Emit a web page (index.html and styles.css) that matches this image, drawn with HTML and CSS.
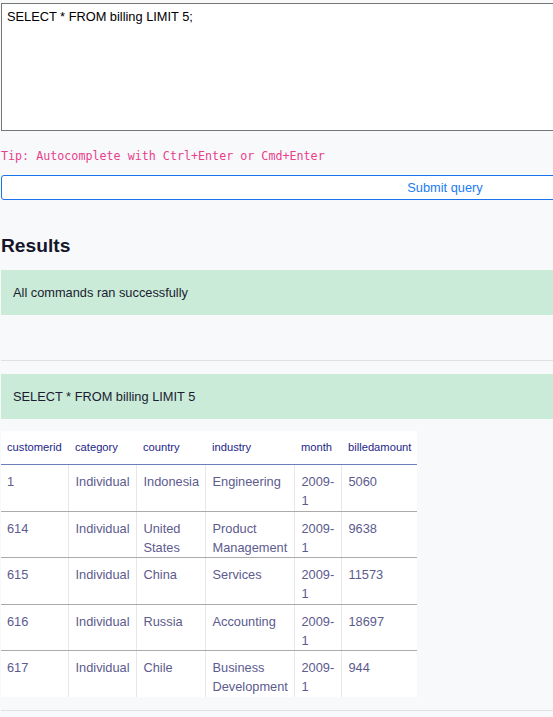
FILE: index.html
```html
<!DOCTYPE html>
<html lang="en">
<head>
<meta charset="utf-8">
<title>Query</title>
<link rel="stylesheet" href="styles.css">
</head>
<body>
<div class="page">
  <textarea class="editor" readonly>SELECT * FROM billing LIMIT 5;</textarea>
  <div class="tip">Tip: Autocomplete with Ctrl+Enter or Cmd+Enter</div>
  <button class="submit" type="button">Submit query</button>
  <h2 class="results-title">Results</h2>
  <div class="alert">All commands ran successfully</div>
  <hr class="divider">
  <div class="alert">SELECT * FROM billing LIMIT 5</div>
  <table class="grid">
    <colgroup>
      <col class="c1"><col class="c2"><col class="c3"><col class="c4"><col class="c5"><col class="c6">
    </colgroup>
    <thead>
      <tr><th>customerid</th><th>category</th><th>country</th><th>industry</th><th>month</th><th>billedamount</th></tr>
    </thead>
    <tbody>
      <tr><td>1</td><td>Individual</td><td>Indonesia</td><td>Engineering</td><td>2009-1</td><td>5060</td></tr>
      <tr><td>614</td><td>Individual</td><td>United States</td><td>Product Management</td><td>2009-1</td><td>9638</td></tr>
      <tr><td>615</td><td>Individual</td><td>China</td><td>Services</td><td>2009-1</td><td>11573</td></tr>
      <tr><td>616</td><td>Individual</td><td>Russia</td><td>Accounting</td><td>2009-1</td><td>18697</td></tr>
      <tr><td>617</td><td>Individual</td><td>Chile</td><td>Business Development</td><td>2009-1</td><td>944</td></tr>
    </tbody>
  </table>
  <hr class="divider bottom">
</div>
</body>
</html>
```

FILE: styles.css
```css
html, body {
  margin: 0;
  padding: 0;
  background: #f8f9fb;
  overflow-x: hidden;
}

.page {
  width: 888px;
  padding-left: 1px;
  padding-top: 3px;
  font-family: "Liberation Sans", Arial, sans-serif;
  font-size: 12.8px;
  color: #1c1c30;
}

.editor {
  display: block;
  box-sizing: border-box;
  width: 888px;
  height: 128px;
  margin: 0;
  padding: 5px 5px;
  border: 1px solid #767676;
  background: #fff;
  font-family: "Liberation Sans", Arial, sans-serif;
  font-size: 12.8px;
  line-height: 15px;
  color: #000;
  resize: none;
  outline: none;
}

.tip {
  margin-top: 17px;
  height: 16px;
  line-height: 16px;
  font-family: "DejaVu Sans Mono", monospace;
  font-size: 11.7px;
  color: #e83e8c;
}

.submit {
  display: block;
  box-sizing: border-box;
  width: 888px;
  height: 25px;
  margin: 11px 0 0;
  padding: 0;
  border: 1px solid #1a73e8;
  border-radius: 3px;
  background: #fff;
  font-family: "Liberation Sans", Arial, sans-serif;
  font-size: 12.8px;
  color: #1a7cf2;
}

.results-title {
  margin: 34px 0 0;
  font-size: 19.2px;
  line-height: 23px;
  font-weight: bold;
  color: #16162a;
}

.alert {
  margin-top: 13px;
  padding: 12.9px 12px;
  background: #c9ebd8;
  line-height: 19.2px;
  color: #1c1c30;
}

.divider {
  margin: 45px 0 0;
  border: 0;
  border-top: 1px solid #dfe1e5;
  height: 0;
}

.divider.bottom {
  margin-top: 13px;
}

.grid {
  margin-top: 12px;
  width: 416px;
  table-layout: fixed;
  border-collapse: collapse;
  background: #fff;
}

.c1 { width: 67px; }
.c2 { width: 68px; }
.c3 { width: 69px; }
.c4 { width: 89px; }
.c5 { width: 47px; }
.c6 { width: 76px; }

.grid th {
  height: 33px;
  padding: 0 4px 0 7px;
  text-align: left;
  font-weight: normal;
  font-size: 11.2px;
  color: #1d2687;
  white-space: nowrap;
  vertical-align: middle;
  border-bottom: 1px solid #6d7db9;
}

.grid td {
  padding: 7px 4px 0.6px 7px;
  vertical-align: top;
  line-height: 19px;
  font-size: 12.8px;
  color: #5c5b8e;
  border-left: 1px solid #e7e7ea;
  border-bottom: 1px solid #ababab;
  height: 38px;
}

.grid th:first-child,
.grid td:first-child {
  padding-left: 6px;
}

.grid td:first-child {
  border-left: 0;
}

.grid tbody tr:last-child td {
  border-bottom: 0;
}
```
